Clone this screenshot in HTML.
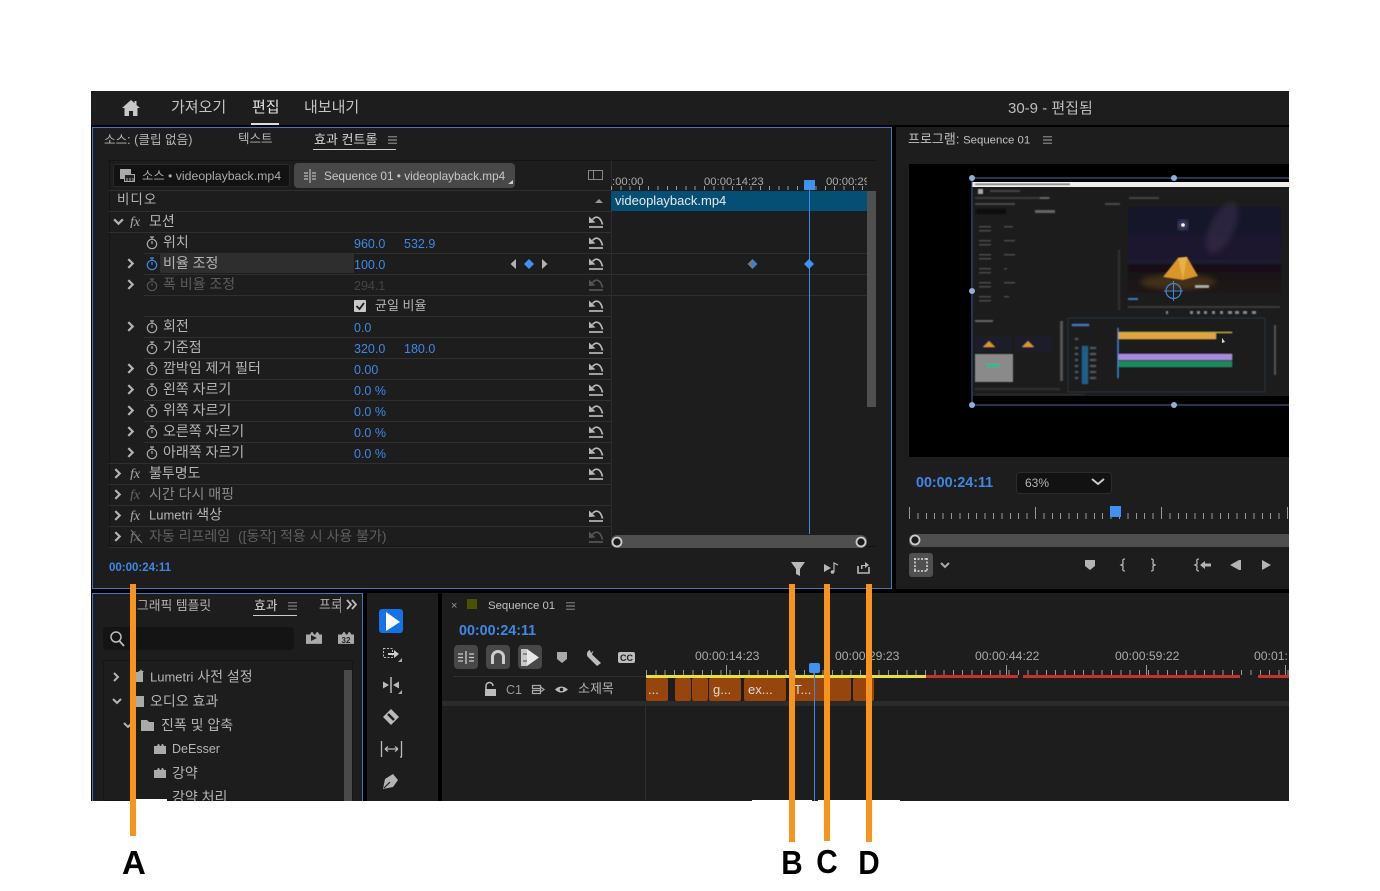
<!DOCTYPE html>
<html lang="ko"><head><meta charset="utf-8"><title>Premiere</title>
<style>
html,body{margin:0;padding:0;background:#fff}
body{width:1380px;height:891px;position:relative;overflow:hidden;font-family:"Liberation Sans","Noto Sans CJK KR",sans-serif;font-size:14px;color:#b4b4b4}
#app{position:absolute;left:91px;top:91px;width:1198px;height:710px;background:#000;overflow:hidden}
.p{position:absolute;background:#1d1d1d}
.o{position:absolute;left:-91px;top:-91px;width:1380px;height:891px}
.t{position:absolute;white-space:nowrap;transform:translateY(-50%);line-height:16px;margin-top:1px}
.v{color:#3f88e6;font-size:12.5px}
.d{color:#5c5c5c}
.ln{position:absolute;height:1px;background:#2f2f2f}
.or{position:absolute;width:6px;background:#f7941d;z-index:9}
.ltr{position:absolute;z-index:9;color:#000;font-weight:bold;font-size:33px;line-height:36px;transform:scaleX(.9);font-family:"Liberation Sans",sans-serif}
.c{position:absolute;top:586px;height:24px;background:#96450c;border-radius:2px;color:#ddd;font-size:13px;line-height:24px;text-indent:2px;overflow:hidden}
.l{font-size:13px}
.r{font-size:11.3px;color:#aaa}
svg{position:absolute;left:0;top:0}
</style></head><body>
<div id="app"><div class="o">
<!-- panels -->
<div class="p" style="left:91px;top:91px;width:1198px;height:34px"></div>
<div class="p" style="left:92px;top:127px;width:798px;height:460px;border:1px solid #3f78bd"></div>
<div class="p" style="left:896px;top:127px;width:393px;height:462px"></div>
<div class="p" style="left:92px;top:593px;width:269px;height:208px;border:1px solid #3f78bd;border-bottom:0"></div>
<div class="p" style="left:367px;top:593px;width:71px;height:208px"></div>
<div class="p" style="left:442px;top:593px;width:847px;height:208px"></div>

<!-- top nav -->
<div class="t" style="left:171px;top:107px;font-size:15px;color:#c4c4c4">가져오기</div>
<div class="t" style="left:252px;top:107px;font-size:15px;color:#e6e6e6">편집</div>
<div style="position:absolute;left:251px;top:123px;width:28px;height:2px;background:#ddd"></div>
<div class="t" style="left:304px;top:107px;font-size:15px;color:#c4c4c4">내보내기</div>
<div class="t" style="left:1008px;top:108px;font-size:15px;color:#bdbdbd">30-9 - 편집됨</div>

<!-- EC tabs -->
<div class="t" style="left:104px;top:139px;font-size:12.6px">소스: (클립 없음)</div>
<div class="t" style="left:238px;top:138px;font-size:12.5px">텍스트</div>
<div class="t" style="left:314px;top:139px;color:#d6d6d6;font-size:13px">효과 컨트롤</div>
<div style="position:absolute;left:313px;top:149px;width:83px;height:1px;background:#ccc"></div>

<!-- EC inner -->
<div style="position:absolute;left:109px;top:160px;width:767px;height:387px;border:1px solid #141414;box-sizing:border-box;border-right:0"></div>
<div style="position:absolute;left:113px;top:164px;width:177px;height:23px;background:#121212;border:1px solid #2a2a2a;box-sizing:border-box;border-radius:3px"></div>
<div style="position:absolute;left:294px;top:163px;width:221px;height:25px;background:#484848;border-radius:4px"></div>
<div class="t" style="left:142px;top:175px;font-size:12.3px;color:#aaa">소스 • videoplayback.mp4</div>
<div class="t" style="left:324px;top:175px;font-size:11.8px;color:#c6c6c6">Sequence 01 • videoplayback.mp4</div>

<div class="ln" style="left:109px;top:190px;width:502px"></div>
<div class="ln" style="left:109px;top:211px;width:502px"></div>
<div class="ln" style="left:109px;top:232px;width:502px"></div>
<div class="ln" style="left:144px;top:253px;width:723px"></div>
<div class="ln" style="left:144px;top:274px;width:723px"></div>
<div class="ln" style="left:144px;top:295px;width:723px"></div>
<div class="ln" style="left:144px;top:316px;width:467px"></div>
<div class="ln" style="left:144px;top:337px;width:467px"></div>
<div class="ln" style="left:144px;top:358px;width:467px"></div>
<div class="ln" style="left:144px;top:379px;width:467px"></div>
<div class="ln" style="left:144px;top:400px;width:467px"></div>
<div class="ln" style="left:144px;top:421px;width:467px"></div>
<div class="ln" style="left:144px;top:442px;width:467px"></div>
<div class="ln" style="left:109px;top:463px;width:502px"></div>
<div class="ln" style="left:109px;top:484px;width:502px"></div>
<div class="ln" style="left:109px;top:505px;width:502px"></div>
<div class="ln" style="left:109px;top:526px;width:502px"></div>
<div class="ln" style="left:109px;top:547px;width:502px"></div>
<div style="position:absolute;left:611px;top:160px;width:1px;height:387px;background:#2c2c2c"></div>
<div style="position:absolute;left:160px;top:254px;width:194px;height:19px;background:#2e2e2e"></div>

<div class="t" style="left:117px;top:199px;font-size:13.5px;letter-spacing:1px">비디오</div>
<div class="t" style="left:149px;top:220px">모션</div>
<div class="t" style="left:163px;top:241px">위치</div>
<div class="t" style="left:163px;top:262px">비율 조정</div>
<div class="t d" style="left:163px;top:283px">폭 비율 조정</div>
<div class="t" style="left:375px;top:305px;font-size:13px">균일 비율</div>
<div class="t" style="left:163px;top:325px">회전</div>
<div class="t" style="left:163px;top:346px">기준점</div>
<div class="t" style="left:163px;top:367px">깜박임 제거 필터</div>
<div class="t" style="left:163px;top:388px">왼쪽 자르기</div>
<div class="t" style="left:163px;top:409px">위쪽 자르기</div>
<div class="t" style="left:163px;top:430px">오른쪽 자르기</div>
<div class="t" style="left:163px;top:451px">아래쪽 자르기</div>
<div class="t" style="left:149px;top:472px">불투명도</div>
<div class="t" style="left:149px;top:493px;color:#8a8a8a">시간 다시 매핑</div>
<div class="t" style="left:149px;top:514px"><span class="l">Lumetri</span> 색상</div>
<div class="t" style="left:149px;top:535px;color:#5f5f5f">자동 리프레임 &nbsp;([동작] 적용 시 사용 불가)</div>

<div class="t v" style="left:354px;top:243px">960.0</div><div class="t v" style="left:404px;top:243px">532.9</div>
<div class="t v" style="left:354px;top:264px">100.0</div>
<div class="t v" style="left:354px;top:285px;color:#444">294.1</div>
<div class="t v" style="left:354px;top:327px">0.0</div>
<div class="t v" style="left:354px;top:348px">320.0</div><div class="t v" style="left:404px;top:348px">180.0</div>
<div class="t v" style="left:354px;top:369px">0.00</div>
<div class="t v" style="left:354px;top:390px">0.0 %</div>
<div class="t v" style="left:354px;top:411px">0.0 %</div>
<div class="t v" style="left:354px;top:432px">0.0 %</div>
<div class="t v" style="left:354px;top:453px">0.0 %</div>

<!-- EC timeline -->
<div style="position:absolute;left:611px;top:186px;width:256px;height:4px;background:repeating-linear-gradient(90deg,#999 0 1px,transparent 1px 9.3px)"></div>
<div style="position:absolute;left:611px;top:191px;width:256px;height:20px;background:#064f74"></div>
<div class="t" style="left:615px;top:200px;font-size:13px;color:#e8e8e8">videoplayback.mp4</div>
<div class="t r" style="left:612px;top:181px">:00:00</div>
<div class="t r" style="left:704px;top:181px">00:00:14:23</div>
<div class="r" style="position:absolute;left:826px;top:174px;width:41px;height:16px;overflow:hidden;line-height:16px;white-space:nowrap">00:00:29:23</div>
<div style="position:absolute;left:867px;top:191px;width:9px;height:216px;background:#505050"></div>
<div style="position:absolute;left:611px;top:535px;width:256px;height:13px;background:#4f4f4f;border-radius:6px"></div>
<div style="position:absolute;left:804px;top:180px;width:11px;height:10px;background:#3f92f2"></div>
<div style="position:absolute;left:809px;top:190px;width:1px;height:344px;background:#3f88e6"></div>

<div class="t" style="left:109px;top:567px;font-size:11.5px;font-weight:bold;color:#3f88e6">00:00:24:11</div>

<!-- Program -->
<div class="t" style="left:908px;top:139px;color:#c2c2c2;font-size:13px">프로그램: <span style="font-size:11.4px">Sequence 01</span></div>
<div style="position:absolute;left:909px;top:164px;width:380px;height:293px;background:#000"></div>
<div class="t" style="left:916px;top:482px;font-size:14.3px;font-weight:bold;color:#3f88e6">00:00:24:11</div>
<div style="position:absolute;left:1016px;top:472px;width:96px;height:22px;background:#121212;border:1px solid #2b2b2b;box-sizing:border-box;border-radius:4px"></div>
<div class="t" style="left:1025px;top:482px;font-size:12px">63%</div>
<div style="position:absolute;left:909px;top:513px;width:380px;height:6px;background:repeating-linear-gradient(90deg,#999 0 1px,transparent 1px 8.4px)"></div>
<div style="position:absolute;left:909px;top:507px;width:380px;height:12px;background:repeating-linear-gradient(90deg,#999 0 1px,transparent 1px 126px)"></div>
<div style="position:absolute;left:1110px;top:506px;width:11px;height:11px;background:#3f92f2"></div>
<div style="position:absolute;left:909px;top:534px;width:380px;height:13px;background:#4f4f4f;border-radius:6px 0 0 6px"></div>
<div style="position:absolute;left:909px;top:553px;width:24px;height:24px;background:#505050;border-radius:3px"></div>

<!-- Effects -->
<div class="t" style="left:137px;top:605px;font-size:12.8px">그래픽 템플릿</div>
<div class="t" style="left:254px;top:605px;color:#d6d6d6;font-size:12.8px">효과</div>
<div style="position:absolute;left:253px;top:615px;width:44px;height:1px;background:#ccc"></div>
<div style="position:absolute;left:319px;top:597px;width:21px;height:16px;overflow:hidden;line-height:16px;white-space:nowrap;border-right:1px solid #888;font-size:12.8px">프로젝트</div>
<div style="position:absolute;left:103px;top:627px;width:191px;height:23px;background:#141414;border-radius:4px"></div>
<div style="position:absolute;left:103px;top:660px;width:250px;height:141px;border:1px solid #151515;box-sizing:border-box;border-radius:3px"></div>
<div style="position:absolute;left:344px;top:670px;width:8px;height:131px;background:#4a4a4a"></div>
<div class="t" style="left:150px;top:676px"><span class="l">Lumetri</span> 사전 설정</div>
<div class="t" style="left:150px;top:700px">오디오 효과</div>
<div class="t" style="left:161px;top:724px">진폭 및 압축</div>
<div class="t" style="left:172px;top:748px;font-size:12.5px">DeEsser</div>
<div class="t" style="left:172px;top:772px">강약</div>
<div class="t" style="left:172px;top:796px">강약 처리</div>

<!-- Tools -->
<div style="position:absolute;left:379px;top:609px;width:24px;height:24px;background:#1473e6;border-radius:3px"></div>

<!-- Timeline -->
<div class="t" style="left:451px;top:605px;font-size:11px;color:#999">×</div>
<div style="position:absolute;left:467px;top:599px;width:10px;height:10px;background:#4a5200"></div>
<div class="t" style="left:488px;top:605px;color:#c2c2c2;font-size:11.4px">Sequence 01</div>
<div class="t" style="left:459px;top:630px;font-size:14.3px;font-weight:bold;color:#3f88e6">00:00:24:11</div>
<div style="position:absolute;left:454px;top:645px;width:24px;height:24px;background:#484848;border-radius:4px"></div>
<div style="position:absolute;left:486px;top:645px;width:24px;height:24px;background:#484848;border-radius:4px"></div>
<div style="position:absolute;left:518px;top:645px;width:24px;height:24px;background:#484848;border-radius:4px"></div>
<div class="ln" style="left:453px;top:676px;width:193px"></div>
<div class="t" style="left:506px;top:689px;font-size:12.5px;color:#999">C1</div>
<div class="t" style="left:578px;top:688px;font-size:13px">소제목</div>
<div class="t" style="left:695px;top:655px;color:#aaa;font-size:12.2px">00:00:14:23</div>
<div class="t" style="left:835px;top:655px;color:#aaa;font-size:12.2px">00:00:29:23</div>
<div class="t" style="left:975px;top:655px;color:#aaa;font-size:12.2px">00:00:44:22</div>
<div class="t" style="left:1115px;top:655px;color:#aaa;font-size:12.2px">00:00:59:22</div>
<div class="t" style="left:1254px;top:655px;color:#aaa;font-size:12.2px">00:01:</div>
<div style="position:absolute;left:646px;top:670px;width:643px;height:5px;background:repeating-linear-gradient(90deg,#999 0 1px,transparent 1px 9.3px)"></div>
<div style="position:absolute;left:726px;top:665px;width:1px;height:10px;background:#999"></div>
<div style="position:absolute;left:866px;top:665px;width:1px;height:10px;background:#999"></div>
<div style="position:absolute;left:1006px;top:665px;width:1px;height:10px;background:#999"></div>
<div style="position:absolute;left:1146px;top:665px;width:1px;height:10px;background:#999"></div>
<div style="position:absolute;left:1285px;top:665px;width:1px;height:10px;background:#999"></div>
<div style="position:absolute;left:646px;top:675px;width:280px;height:3px;background:#e8e040"></div>
<div style="position:absolute;left:926px;top:675px;width:92px;height:3px;background:#c8302a"></div>
<div style="position:absolute;left:1023px;top:675px;width:217px;height:3px;background:#c8302a"></div>
<div style="position:absolute;left:1258px;top:675px;width:31px;height:3px;background:#c8302a"></div>
<div class="c" style="left:646px;top:678px;height:23px;width:22px">...</div>
<div class="c" style="left:675px;top:678px;height:23px;width:16px"></div>
<div class="c" style="left:692px;top:678px;height:23px;width:16px"></div>
<div class="c" style="left:709px;top:678px;height:23px;width:32px;text-indent:4px">g...</div>
<div class="c" style="left:744px;top:678px;height:23px;width:42px;text-indent:4px">ex...</div>
<div class="c" style="left:790px;top:678px;height:23px;width:61px;text-indent:4px">T...</div>
<div class="c" style="left:853px;top:678px;height:23px;width:21px"></div>
<div style="position:absolute;left:442px;top:701px;width:847px;height:5px;background:#2b2b2b"></div>
<div style="position:absolute;left:645px;top:706px;width:1px;height:95px;background:#2e2e2e"></div>
<div style="position:absolute;left:814px;top:672px;width:1px;height:129px;background:#3f88e6"></div>
<div style="position:absolute;left:809px;top:663px;width:11px;height:10px;background:#3f92f2;border-radius:2px"></div>

<!-- icon layer -->
<svg width="1380" height="891" viewBox="0 0 1380 891">
<defs>
<filter id="b"><feGaussianBlur stdDeviation=".45"/></filter>
<filter id="b2"><feGaussianBlur stdDeviation="3"/></filter>
<linearGradient id="sky" x1="0" y1="0" x2="0" y2="1"><stop offset="0" stop-color="#15152a"/><stop offset=".65" stop-color="#1e1a30"/><stop offset=".68" stop-color="#120f14"/><stop offset="1" stop-color="#201a16"/></linearGradient>
<symbol id="r" viewBox="0 0 16 14"><path d="M1 13H15" stroke="currentColor" stroke-width="1.7"/><path d="M1 2.500V9L7.500 8.500Z" fill="currentColor"/><path d="M4.500 5.500C8 1.500 12.500 2.500 14.500 10.500" fill="none" stroke="currentColor" stroke-width="1.700"/></symbol>
<symbol id="w" viewBox="0 0 12 14"><circle cx="6" cy="8" r="4.7" fill="none" stroke="currentColor" stroke-width="1.2"/><path d="M4 1H8M6 1V3.5M6 8L6 5" stroke="currentColor" stroke-width="1.2"/></symbol>
<symbol id="cr" viewBox="0 0 8 10"><path d="M2 1L6 5L2 9" fill="none" stroke="currentColor" stroke-width="2"/></symbol>
<symbol id="cd" viewBox="0 0 10 8"><path d="M1 2L5 6L9 2" fill="none" stroke="currentColor" stroke-width="2"/></symbol>
<symbol id="fx" viewBox="0 0 12 12"><text x="0" y="10" font-family="Liberation Serif,serif" font-style="italic" font-size="13" fill="currentColor">fx</text></symbol>
<symbol id="m" viewBox="0 0 10 8"><path d="M0 .5H10M0 4H10M0 7.5H10" stroke="currentColor" stroke-width="1"/></symbol>
<symbol id="k" viewBox="0 0 12 12" preserveAspectRatio="none"><path d="M0 3H3L4 1H5L6 3H7L8 1H9L10 3H12V11H0Z" fill="currentColor"/></symbol>
</defs>

<!-- home -->
<path d="M131 100L122 108H124.500V116H129V111H133V116H137.500V108H140L136.500 105V101H134.500V103Z" fill="#c8c8c8"/>
<use href="#m" x="388" y="136" width="9" height="8" color="#aaa"/>
<use href="#m" x="1043" y="136" width="9" height="8" color="#aaa"/>
<use href="#m" x="288" y="602" width="9" height="8" color="#999"/>
<use href="#m" x="566" y="602" width="9" height="8" color="#999"/>

<!-- EC tab icons -->
<rect x="120" y="169" width="11" height="10" fill="#aaa"/><rect x="124.500" y="174.500" width="10" height="7" fill="#222" stroke="#aaa"/><path d="M127 178V181M130 178V181M133 178V181" stroke="#aaa"/>
<path d="M310 169V183M304 173H308M304 176H308M304 179H308M312 173H316M312 176H316M312 179H316" stroke="#bbb" stroke-width="1.200"/>
<path d="M513 180V184H508Z" fill="#ccc"/>
<rect x="588.500" y="170.500" width="14" height="9" fill="none" stroke="#888"/><path d="M593.500 171V179" stroke="#888"/>
<path d="M597 203L601 199L605 203Z" transform="translate(-2 0)" fill="#999"/>

<!-- chevrons -->
<g color="#b4b4b4">
<use href="#cd" x="113" y="217" width="11" height="9"/>
<use href="#cr" x="126" y="258" width="9" height="11"/>
<use href="#cr" x="126" y="279" width="9" height="11"/>
<use href="#cr" x="126" y="321" width="9" height="11"/>
<use href="#cr" x="126" y="363" width="9" height="11"/>
<use href="#cr" x="126" y="384" width="9" height="11"/>
<use href="#cr" x="126" y="405" width="9" height="11"/>
<use href="#cr" x="126" y="426" width="9" height="11"/>
<use href="#cr" x="126" y="447" width="9" height="11"/>
<use href="#cr" x="113" y="468" width="9" height="11"/>
<use href="#cr" x="113" y="489" width="9" height="11"/>
<use href="#cr" x="113" y="510" width="9" height="11"/>
<use href="#cr" x="113" y="531" width="9" height="11"/>
<use href="#cr" x="112" y="672" width="8" height="10"/>
<use href="#cd" x="112" y="697" width="10" height="8"/>
<use href="#cd" x="123" y="721" width="10" height="8"/>
</g>

<!-- fx -->
<use href="#fx" x="130" y="215" width="13" height="13" color="#aaa"/>
<use href="#fx" x="130" y="467" width="13" height="13" color="#aaa"/>
<use href="#fx" x="130" y="488" width="13" height="13" color="#666"/>
<use href="#fx" x="130" y="509" width="13" height="13" color="#aaa"/>
<use href="#fx" x="130" y="530" width="13" height="13" color="#777"/>
<path d="M131 530L142 543" stroke="#777"/>

<!-- watches -->
<g color="#aaa">
<use href="#w" x="146" y="236" width="12" height="14"/>
<use href="#w" x="146" y="257" width="12" height="14" color="#3f88e6"/>
<use href="#w" x="146" y="278" width="12" height="14" color="#555"/>
<use href="#w" x="146" y="320" width="12" height="14"/>
<use href="#w" x="146" y="341" width="12" height="14"/>
<use href="#w" x="146" y="362" width="12" height="14"/>
<use href="#w" x="146" y="383" width="12" height="14"/>
<use href="#w" x="146" y="404" width="12" height="14"/>
<use href="#w" x="146" y="425" width="12" height="14"/>
<use href="#w" x="146" y="446" width="12" height="14"/>
</g>

<!-- resets -->
<g color="#b8b8b8">
<use href="#r" x="588" y="214" width="16" height="14"/>
<use href="#r" x="588" y="235" width="16" height="14"/>
<use href="#r" x="588" y="256" width="16" height="14"/>
<use href="#r" x="588" y="277" width="16" height="14" color="#555"/>
<use href="#r" x="588" y="298" width="16" height="14"/>
<use href="#r" x="588" y="319" width="16" height="14"/>
<use href="#r" x="588" y="340" width="16" height="14"/>
<use href="#r" x="588" y="361" width="16" height="14"/>
<use href="#r" x="588" y="382" width="16" height="14"/>
<use href="#r" x="588" y="403" width="16" height="14"/>
<use href="#r" x="588" y="424" width="16" height="14"/>
<use href="#r" x="588" y="445" width="16" height="14"/>
<use href="#r" x="588" y="466" width="16" height="14"/>
<use href="#r" x="588" y="508" width="16" height="14"/>
<use href="#r" x="588" y="529" width="16" height="14" color="#555"/>
</g>

<!-- checkbox -->
<rect x="354" y="300" width="12" height="12" rx="1" fill="#c8c8c8"/><path d="M356.500 306L359.500 309L364 303" fill="none" stroke="#1a1a1a" stroke-width="1.800"/>

<!-- kf nav -->
<path d="M516 259V269L510.500 264Z" fill="#b4b4b4"/><path d="M542 259V269L547.500 264Z" fill="#b4b4b4"/>
<path d="M529 259L534 264L529 269L524 264Z" fill="#3f92f2"/>
<path d="M752.500 259L752.500 269L747.500 264Z" fill="#6d7885"/><path d="M752.500 259L757.500 264L752.500 269Z" fill="#3f7fcc"/>
<path d="M809 259L814 264L809 269L804 264Z" fill="#3f92f2"/>

<!-- scroll handles -->
<circle cx="617" cy="542" r="4.500" fill="#1a1a1a" stroke="#ccc" stroke-width="1.800"/>
<circle cx="861" cy="542" r="4.500" fill="#1a1a1a" stroke="#ccc" stroke-width="1.800"/>
<circle cx="915" cy="540" r="4.500" fill="#1a1a1a" stroke="#ccc" stroke-width="1.800"/>

<!-- EC footer icons -->
<path d="M791 562H805L800 569V576L796 574V569Z" fill="#b8b8b8"/>
<path d="M824 564V572L831 568Z" fill="#b8b8b8"/><path d="M834 572V563L838 565" fill="none" stroke="#b8b8b8" stroke-width="1.200"/><circle cx="832.500" cy="572" r="1.800" fill="#b8b8b8"/>
<path d="M858 566V573H869V567" fill="none" stroke="#b8b8b8" stroke-width="1.600"/><path d="M861 569V565H865V562L869 565L865 568V566H862.500V569Z" fill="#b8b8b8"/>

<!-- nested screenshot -->
<g>
<rect x="973" y="187" width="316" height="209" fill="#1c1c1c"/>
<rect x="972" y="182" width="317" height="5" fill="#eee"/>
<g filter="url(#b)">
<rect x="975" y="183.500" width="95" height="1.500" fill="#777"/>
<rect x="978" y="189" width="5" height="5" fill="#aaa"/><rect x="990" y="190" width="30" height="2" fill="#444"/>
<rect x="975" y="197" width="75" height="2" fill="#3a3a3a"/><rect x="1040" y="197" width="9" height="2" fill="#666"/>
<rect x="975" y="203" width="40" height="2" fill="#4a4a4a"/><rect x="1105" y="203" width="15" height="2" fill="#4a4a4a"/>
<rect x="976" y="209" width="30" height="5" fill="#111"/><rect x="1035" y="210" width="20" height="3" fill="#666"/>
<rect x="1129" y="197" width="30" height="2" fill="#444"/>
<g fill="#4c4c4c"><rect x="979" y="226" width="12" height="1.500"/><rect x="979" y="230" width="12" height="1.500"/><rect x="1004" y="226" width="9" height="1.500"/><rect x="979" y="240" width="12" height="1.500"/><rect x="979" y="244" width="12" height="1.500"/><rect x="1004" y="240" width="11" height="1.500"/><rect x="979" y="254" width="12" height="1.500"/><rect x="979" y="258" width="12" height="1.500"/><rect x="1004" y="254" width="11" height="1.500"/><rect x="979" y="268" width="12" height="1.500"/><rect x="979" y="272" width="12" height="1.500"/><rect x="1004" y="268" width="3" height="1.500"/><rect x="979" y="282" width="12" height="1.500"/><rect x="979" y="286" width="12" height="1.500"/><rect x="1004" y="282" width="11" height="1.500"/><rect x="979" y="296" width="12" height="1.500"/><rect x="979" y="300" width="12" height="1.500"/><rect x="1004" y="296" width="5" height="1.500"/></g>
<rect x="1118" y="250" width="2" height="60" fill="#333"/>
<rect x="1128" y="207" width="153" height="86" fill="url(#sky)"/>
</g>
<ellipse cx="1222" cy="228" rx="12" ry="28" fill="#4a3a5c" opacity=".4" filter="url(#b2)" transform="rotate(25 1222 228)"/>
<ellipse cx="1178" cy="282" rx="38" ry="8" fill="#6b4a1c" opacity=".5" filter="url(#b2)"/>
<circle cx="1183" cy="225" r="5" fill="#8c88c8" opacity=".5" filter="url(#b2)"/><circle cx="1183" cy="225" r="1.800" fill="#fff"/>
<path d="M1163 277L1178 258L1187 257L1198 276L1183 280Z" fill="#d9962b" filter="url(#b)"/>
<path d="M1178 258L1187 257L1183 280Z" fill="#e8b04a" filter="url(#b)"/>
<circle cx="1173.500" cy="291" r="7.500" fill="none" stroke="#3f88d8" stroke-width="1.200"/><path d="M1173.500 281V301M1164 291H1183" stroke="#3f88d8"/>
<rect x="1195" y="285" width="14" height="3" fill="#aaa" filter="url(#b)"/>
<g filter="url(#b)">
<rect x="1128" y="298" width="10" height="2" fill="#3f78bd"/><rect x="1128" y="306" width="152" height="2" fill="#3a3a3a"/>
<g fill="#888"><rect x="1166" y="311" width="2" height="3"/><rect x="1190" y="311" width="3" height="3"/><rect x="1197" y="311" width="3" height="3"/><rect x="1204" y="311" width="3" height="3"/><rect x="1212" y="311" width="3" height="3"/><rect x="1220" y="311" width="3" height="3"/><rect x="1228" y="311" width="4" height="3"/><rect x="1235" y="311" width="4" height="3"/><rect x="1243" y="311" width="4" height="3"/><rect x="1252" y="311" width="4" height="3"/></g>
<rect x="975" y="320" width="18" height="2" fill="#666"/>
<rect x="975" y="336" width="37" height="16" fill="#1d1a2c"/><rect x="1015" y="336" width="37" height="16" fill="#1d1a2c"/>
<path d="M983 347L989 341L995 347Z" fill="#d9962b"/><path d="M1022 347L1028 341L1034 347Z" fill="#d9962b"/>
<rect x="975" y="354" width="38" height="28" fill="#8a8a8a"/><rect x="987" y="364" width="12" height="3" fill="#1fc08c"/>
<rect x="1068" y="318" width="197" height="74" fill="#1a1a1a" stroke="#25303e"/>
<rect x="1072" y="324" width="17" height="2" fill="#3f78bd"/>
<rect x="1118" y="332" width="114" height="1" fill="#b8b040"/>
<rect x="1118" y="333" width="98" height="6" fill="#e0a53f"/>
<rect x="1118" y="354" width="114" height="6" fill="#a98ae0"/>
<rect x="1118" y="361" width="114" height="6" fill="#1c8a5c"/>
<rect x="1082" y="346" width="6" height="38" fill="#1a5f8a"/>
<rect x="1117.500" y="328" width="1" height="50" fill="#3f88d8"/>
<g fill="#555"><rect x="1075" y="338" width="3" height="2"/><rect x="1075" y="347" width="3" height="2"/><rect x="1075" y="353" width="3" height="2"/><rect x="1075" y="359" width="3" height="2"/><rect x="1075" y="365" width="3" height="2"/><rect x="1075" y="371" width="3" height="2"/><rect x="1075" y="377" width="3" height="2"/><rect x="1090" y="347" width="6" height="2"/><rect x="1090" y="353" width="6" height="2"/><rect x="1090" y="359" width="6" height="2"/><rect x="1090" y="365" width="6" height="2"/><rect x="1090" y="371" width="6" height="2"/><rect x="1090" y="377" width="6" height="2"/><rect x="1060" y="321" width="3" height="60"/><rect x="1274" y="325" width="2" height="50"/></g>
<rect x="975" y="388" width="85" height="2" fill="#333"/>
<rect x="975" y="394" width="110" height="1" fill="#333"/>
</g>
<path d="M1222 338L1222 343L1225 342Z" fill="#ddd"/>
</g>
<!-- selection -->
<path d="M972 178H1289M972 405H1289M972 178V405" stroke="#3f6fa8" stroke-width="1" fill="none"/>
<g fill="#8fb0d8"><circle cx="972" cy="178" r="3"/><circle cx="1174" cy="178" r="3"/><circle cx="972" cy="291" r="3"/><circle cx="972" cy="405" r="3"/><circle cx="1174" cy="405" r="3"/></g>

<!-- program controls -->
<path d="M1092 479L1098 484L1104 479" fill="none" stroke="#ccc" stroke-width="2"/>
<path d="M914 559H928M914 571H928M915 558V572M927 558V572" stroke="#ddd" stroke-width="1.500" stroke-dasharray="2 1.500" fill="none"/>
<use href="#cd" x="940" y="561" width="10" height="8" color="#aaa"/>
<path d="M1085 560H1095V566L1090 570L1085 566Z" fill="#b4b4b4"/>
<path d="M1125 559Q1122 559 1123 562V564L1121 565L1123 566V568Q1122 571 1125 571" fill="none" stroke="#b4b4b4" stroke-width="1.300"/>
<path d="M1151 559Q1154 559 1153 562V564L1155 565L1153 566V568Q1154 571 1151 571" fill="none" stroke="#b4b4b4" stroke-width="1.300"/>
<path d="M1199 559Q1196 559 1197 562V564L1195 565L1197 566V568Q1196 571 1199 571" fill="none" stroke="#b4b4b4" stroke-width="1.300"/>
<path d="M1200 565L1205 561V563.500H1211V566.500H1205V569Z" fill="#b4b4b4"/>
<path d="M1239 560V570L1230 565Z" fill="#b4b4b4"/><rect x="1239" y="560" width="2" height="10" fill="#b4b4b4"/>
<path d="M1262 560V570L1271 565Z" fill="#b4b4b4"/>

<!-- effects icons -->
<circle cx="116" cy="637" r="5" fill="none" stroke="#bbb" stroke-width="1.500"/><path d="M119.500 641L124 646" stroke="#bbb" stroke-width="1.800"/>
<use href="#k" x="306" y="631" width="16" height="14" color="#aaa"/>
<path d="M311 635V641L317 638Z" fill="#222"/>
<use href="#k" x="338" y="631" width="16" height="14" color="#aaa"/>
<text x="346" y="643" text-anchor="middle" font-family="Liberation Sans,sans-serif" font-size="8" font-weight="bold" fill="#222">32</text>
<path d="M347 600L351 604.500L347 609M352 600L356 604.500L352 609" fill="none" stroke="#bbb" stroke-width="1.800"/>
<path d="M130 672H143V682H130Z M140 671L141 669 142 671 144 671 142.500 672.500 143 674 141 673 139 674 139.500 672.500 138 671Z" fill="#aaa"/>
<rect x="130" y="696" width="14" height="11" fill="#aaa"/>
<path d="M141 720H147L149 722H154V731H141Z" fill="#aaa"/>
<use href="#k" x="154" y="743" width="12" height="12" color="#aaa"/>
<use href="#k" x="154" y="767" width="12" height="12" color="#aaa"/>

<!-- tools -->
<path d="M386 612V631L400 622Z" fill="#fff"/>
<rect x="383.500" y="648.500" width="9" height="9" fill="none" stroke="#bbb" stroke-dasharray="2 1.500"/>
<path d="M388 653H394V650L399 654L394 658V655H388Z" fill="#ccc"/><path d="M402 662V658L398 662Z" fill="#aaa"/>
<path d="M391 677V693" stroke="#bbb" stroke-width="1.500"/><path d="M389 685L383 681.500V688.500Z M393 685L399 681.500V688.500Z" fill="#bbb"/><path d="M402 694V690L398 694Z" fill="#aaa"/>
<path d="M391 709L399 717L391 725L383 717Z" fill="#bbb"/><path d="M388 714L394 720" stroke="#1d1d1d" stroke-width="2.500"/>
<path d="M381.500 741V757M401.500 741V757M400 757H402" stroke="#bbb" stroke-width="1.300"/><path d="M385 749H398M385 749L388 746.500M385 749L388 751.500M398 749L395 746.500M398 749L395 751.500" stroke="#bbb" stroke-width="1.200" fill="none"/>
<path d="M383 789L385 779L393 774L398 780L393 787Z" fill="#b4b4b4"/><path d="M384 788L390 782" stroke="#1d1d1d" stroke-width="1.200"/>

<!-- timeline buttons -->
<path d="M466 651V664M458 654H463M458 657.500H463M458 661H463M469 654H474M469 657.500H474M469 661H474" stroke="#ccc" stroke-width="1.300"/>
<path d="M492.500 664V657A5.500 5.500 0 0 1 503.500 657V664" fill="none" stroke="#ccc" stroke-width="3"/>
<path d="M521 649H527V666H521Z" fill="#c8c8c8"/><path d="M527 649L539 657.500L527 666Z" fill="#e8e8e8"/><path d="M523 654H527M523 661H527" stroke="#484848"/>
<path d="M557 652H567V659L562 663L557 659Z" fill="#aaa"/>
<path d="M590 650A4.500 4.500 0 0 0 587.500 656.500L597 666L601 663L592 654.500L593.500 650.500L591 653Z" fill="#bdbdbd"/>
<rect x="618" y="652" width="17" height="11" rx="2" fill="#bdbdbd"/><text x="626.500" y="661" text-anchor="middle" font-family="Liberation Sans,sans-serif" font-size="9" font-weight="bold" fill="#222">CC</text>
<path d="M486 689V686A3.500 3.500 0 0 1 493 686" fill="none" stroke="#bbb" stroke-width="1.500"/><rect x="485" y="689" width="11" height="7" fill="#bbb"/>
<path d="M532.500 685.500H540.500V688.500H532.500ZM532.500 690.500H540.500V693.500H532.500ZM540.500 687L544 689.500L540.500 692Z" fill="none" stroke="#aaa" stroke-width="1.200"/>
<path d="M555 689.500Q561 683.500 568 689.500Q561 695.500 555 689.500Z" fill="#bbb"/><circle cx="561.500" cy="689.500" r="1.800" fill="#1d1d1d"/>
</svg>

<!-- white notches bottom -->
<div style="position:absolute;left:135px;top:799px;width:32px;height:2px;background:#fff"></div>
<div style="position:absolute;left:752px;top:800px;width:60px;height:1px;background:#fff"></div>
<div style="position:absolute;left:818px;top:800px;width:82px;height:1px;background:#fff"></div>
</div></div>

<!-- annotations -->
<div class="or" style="left:130px;top:584px;height:252px"></div>
<div class="or" style="left:789px;top:584px;height:258px"></div>
<div class="or" style="left:824px;top:584px;height:257px"></div>
<div class="or" style="left:866px;top:584px;height:258px"></div>
<div class="ltr" style="left:122px;top:845px;transform:scaleX(1)">A</div>
<div class="ltr" style="left:780px;top:845px">B</div>
<div class="ltr" style="left:815px;top:844px">C</div>
<div class="ltr" style="left:857px;top:845px">D</div>
</body></html>
